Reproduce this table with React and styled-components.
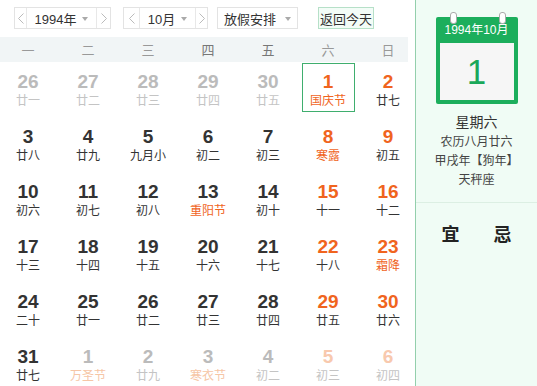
import React from 'react';
import styled, { createGlobalStyle } from 'styled-components';

const GlobalStyle = createGlobalStyle`
  html, body {
    margin: 0;
    padding: 0;
    background: #fff;
  }
  body {
    font-family: "Liberation Sans", "Noto Sans CJK SC", sans-serif;
    color: #333;
    overflow: hidden;
  }
`;

const WEEKDAYS = ['一', '二', '三', '四', '五', '六', '日'];

// kind: '' normal, 'other' other month; we: orange number; fest: orange lunar text
const DAYS = [
  [26, '廿一', 'other'], [27, '廿二', 'other'], [28, '廿三', 'other'], [29, '廿四', 'other'], [30, '廿五', 'other'], [1, '国庆节', 'sel'], [2, '廿七', 'we'],
  [3, '廿八'], [4, '廿九'], [5, '九月小'], [6, '初二'], [7, '初三'], [8, '寒露', 'wefest'], [9, '初五', 'we'],
  [10, '初六'], [11, '初七'], [12, '初八'], [13, '重阳节', 'fest'], [14, '初十'], [15, '十一', 'we'], [16, '十二', 'we'],
  [17, '十三'], [18, '十四'], [19, '十五'], [20, '十六'], [21, '十七'], [22, '十八', 'we'], [23, '霜降', 'wefest'],
  [24, '二十'], [25, '廿一'], [26, '廿二'], [27, '廿三'], [28, '廿四'], [29, '廿五', 'we'], [30, '廿六', 'we'],
  [31, '廿七'], [1, '万圣节', 'otherfest'], [2, '廿九', 'other'], [3, '寒衣节', 'otherfest'], [4, '初二', 'other'], [5, '初三', 'otherwe'], [6, '初四', 'otherwe'],
];

const Page = styled.div`
  display: flex;
  width: 537px;
  height: 386px;
  overflow: hidden;
`;

const Main = styled.div`
  width: 415px;
  flex: none;
`;

const Toolbar = styled.div`
  display: flex;
  align-items: center;
  height: 22px;
  padding: 7px 0 0 14px;
`;

const Picker = styled.div`
  display: flex;
  height: 20px;
  width: ${(p) => p.$w}px;
  margin-right: ${(p) => p.$mr}px;
  border: 1px solid #e3e3e3;
  box-sizing: content-box;
`;

const Arrow = styled.div`
  width: ${(p) => p.$w || 11}px;
  display: flex;
  align-items: center;
  justify-content: center;
  border-${(p) => (p.$right ? 'left' : 'right')}: 1px solid #e8e8e8;
`;

const Select = styled.div`
  flex: 1;
  display: flex;
  align-items: center;
  justify-content: center;
  gap: ${(p) => p.$gap || 6}px;
  font-size: 13px;
  color: #333;
`;

const Caret = styled.span`
  width: 0;
  height: 0;
  border-left: 3px solid transparent;
  border-right: 3px solid transparent;
  border-top: 4px solid #aaa;
  margin-top: 1px;
`;

const TodayButton = styled.div`
  height: 20px;
  padding: 0 1px;
  display: flex;
  align-items: center;
  font-size: 13px;
  color: #333;
  border: 1px solid #b6e0c8;
  background: #f3fcf7;
  margin-left: 20px;
`;

const WeekBar = styled.div`
  display: grid;
  grid-template-columns: repeat(7, 60px);
  width: 410px;
  height: 25px;
  margin-top: 8px;
  margin-left: -2px;
  background: #f1f5f6;
  overflow: hidden;
`;

const WeekDay = styled.div`
  display: flex;
  align-items: center;
  justify-content: center;
  font-size: 13px;
  color: ${(p) => (p.$dark ? '#777' : '#999')};
  font-family: "Noto Sans CJK SC", sans-serif;
`;

const Grid = styled.div`
  display: grid;
  grid-template-columns: repeat(7, 60px);
  grid-auto-rows: 55px;
  margin-left: -2px;
`;

const Cell = styled.div`
  display: flex;
  justify-content: center;
  padding-top: 1px;
`;

const DayBox = styled.div`
  width: 53px;
  height: 49px;
  box-sizing: border-box;
  border: 1px solid ${(p) => (p.$sel ? '#3fae6e' : 'transparent')};
  padding-top: 8px;
  text-align: center;
`;

const Num = styled.div`
  font-size: 19px;
  line-height: 20px;
  font-weight: bold;
  color: ${(p) => p.$c};
`;

const Lunar = styled.div`
  font-size: 12px;
  line-height: 16px;
  font-family: "Noto Sans CJK SC", sans-serif;
  color: ${(p) => p.$c};
`;

const Side = styled.div`
  flex: 1;
  border-left: 1px solid #93cfac;
  background: #f0fcf5;
  display: flex;
  flex-direction: column;
  align-items: center;
`;

const CalIcon = styled.div`
  position: relative;
  margin-top: 17px;
  width: 82px;
  height: 87px;
  background: #1cae5c;
  border-radius: 2px;
  display: flex;
  flex-direction: column;
  align-items: center;
`;

const Ring = styled.span`
  position: absolute;
  top: -5px;
  left: ${(p) => p.$x}px;
  width: 5px;
  height: 10px;
  border-radius: 3px;
  background: #fff;
  border: 1px solid #aaa;
`;

const CalHead = styled.div`
  height: 26px;
  line-height: 27px;
  font-size: 12px;
  color: #fff;
`;

const CalBody = styled.div`
  width: 74px;
  height: 57px;
  background: #f6f6f6;
  display: flex;
  align-items: center;
  justify-content: center;
  font-size: 35px;
  color: #1aa85a;
`;

const Info = styled.div`
  margin-top: 7px;
  text-align: center;
  font-family: "Noto Sans CJK SC", sans-serif;
  color: #444;
  font-size: 12px;
  line-height: 19px;
`;

const WeekName = styled.div`
  font-size: 14px;
  color: #333;
  line-height: 20px;
`;

const Divider = styled.div`
  align-self: stretch;
  border-top: 1px solid #dcefe3;
  margin-top: 14px;
`;

const Tags = styled.div`
  display: flex;
  gap: 34px;
  margin-top: 17px;
  font-family: "Noto Sans CJK SC", sans-serif;
  font-size: 18px;
  font-weight: bold;
  color: #222;
`;

function Chevron({ right }) {
  return (
    <svg width="6" height="11" viewBox="0 0 6 11">
      <path
        d={right ? 'M0.5 0.5 L5.5 5.5 L0.5 10.5' : 'M5.5 0.5 L0.5 5.5 L5.5 10.5'}
        fill="none"
        stroke="#bbb"
        strokeWidth="1"
      />
    </svg>
  );
}

function colors(kind) {
  switch (kind) {
    case 'other': return ['#bbb', '#c4c4c4'];
    case 'otherfest': return ['#bbb', '#f6c6a6'];
    case 'otherwe': return ['#f8c9ae', '#c4c4c4'];
    case 'sel': return ['#f0641e', '#f0641e'];
    case 'we': return ['#f0641e', '#333'];
    case 'wefest': return ['#f0641e', '#f0641e'];
    case 'fest': return ['#333', '#f0641e'];
    default: return ['#333', '#333'];
  }
}

export default function App() {
  return (
    <Page>
      <GlobalStyle />
      <Main>
        <Toolbar>
          <Picker $w={95} $mr={12}>
            <Arrow><Chevron /></Arrow>
            <Select>1994年<Caret /></Select>
            <Arrow $right $w={13}><Chevron right /></Arrow>
          </Picker>
          <Picker $w={83} $mr={9}>
            <Arrow $w={15}><Chevron /></Arrow>
            <Select>10月<Caret /></Select>
            <Arrow $right $w={11}><Chevron right /></Arrow>
          </Picker>
          <Picker $w={79} $mr={0}>
            <Select $gap={9}>放假安排<Caret /></Select>
          </Picker>
          <TodayButton>返回今天</TodayButton>
        </Toolbar>
        <WeekBar>
          {WEEKDAYS.map((d, i) => (
            <WeekDay key={d} $dark={i === 3 || i === 4}>{d}</WeekDay>
          ))}
        </WeekBar>
        <Grid>
          {DAYS.map(([n, l, kind], i) => {
            const [nc, lc] = colors(kind);
            return (
              <Cell key={i}>
                <DayBox $sel={kind === 'sel'}>
                  <Num $c={nc}>{n}</Num>
                  <Lunar $c={lc}>{l}</Lunar>
                </DayBox>
              </Cell>
            );
          })}
        </Grid>
      </Main>
      <Side>
        <CalIcon>
          <Ring $x={14} />
          <Ring $x={63} />
          <CalHead>1994年10月</CalHead>
          <CalBody>1</CalBody>
        </CalIcon>
        <Info>
          <WeekName>星期六</WeekName>
          <div>农历八月廿六</div>
          <div>甲戌年【狗年】</div>
          <div>天秤座</div>
        </Info>
        <Divider />
        <Tags>
          <span>宜</span>
          <span>忌</span>
        </Tags>
      </Side>
    </Page>
  );
}
